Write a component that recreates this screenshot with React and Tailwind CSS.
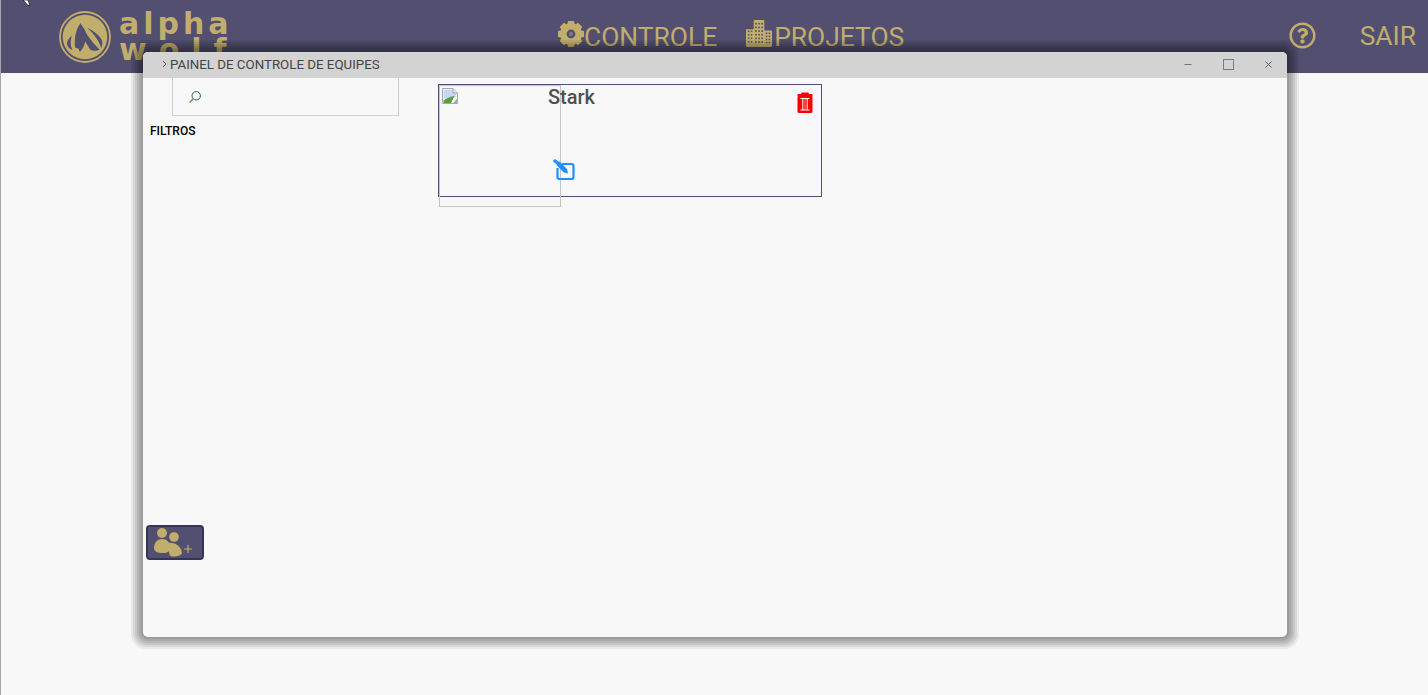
import React from "react";
import { FaRegQuestionCircle } from "react-icons/fa";

const gold = "#c1ad6c";
const dark = "#524f70";

function Logo() {
  return (
    <svg width="54" height="54" viewBox="0 0 54 54" className="shrink-0">
      <circle cx="27" cy="27" r="25" fill="none" stroke={gold} strokeWidth="1.8" />
      <circle cx="27" cy="27" r="22.3" fill={gold} />
      <path d="M22.3 13 L24.5 16.5 C26 18 27 20 27.6 22 C30 27 36 34 41.7 39.7 C38.5 41 35 41 32.3 39.7 C30 36 28.5 33.5 27.3 31.5 C26.5 35 24.5 39 22.3 41.5 C19 41 17.3 39 17 36 C16.5 30 17 25 18.5 21 C19.5 18 21 15.5 22.3 13Z" fill={dark} />
      <path d="M14 25.5 C10.5 28.5 8.8 31 9 34 C9.5 37 12 39.5 14.5 40 C12.5 36.5 12 31 14 25.5Z" fill={dark} />
      <path d="M29 17.5 C36 21 42.5 26 44.2 31 C44.5 34 44 36.5 43.3 38.5 C42 32 36 24 29 17.5Z" fill={dark} />
      <ellipse cx="18.3" cy="40.6" rx="2.8" ry="2.6" fill={gold} />
    </svg>
  );
}

function Gear() {
  const teeth = [0, 45, 90, 135, 180, 225, 270, 315];
  return (
    <svg width="28" height="28" viewBox="0 0 28 28" className="mb-[7px] mr-[-1px] shrink-0">
      {teeth.map((a) => (
        <path key={a} d="M11 1 H17 L18 6 H10Z" fill={gold} transform={`rotate(${a} 14 14)`} />
      ))}
      <circle cx="14" cy="14" r="7.6" fill="none" stroke={gold} strokeWidth="6.4" />
      <circle cx="14" cy="14" r="2.2" fill="#7d7670" />
    </svg>
  );
}

function Building() {
  const win = [];
  for (let r = 0; r < 6; r++) {
    for (let c = 0; c < 3; c++) win.push(<rect key={"a" + r + c} x={9.5 + c * 3.2} y={3 + r * 3.8} width="1.7" height="1.7" fill={dark} />);
  }
  for (let r = 0; r < 4; r++) {
    for (let c = 0; c < 2; c++) {
      win.push(<rect key={"b" + r + c} x={2 + c * 3} y={11 + r * 3.6} width="1.6" height="1.6" fill={dark} />);
      win.push(<rect key={"d" + r + c} x={20.5 + c * 3} y={13 + r * 3.2} width="1.6" height="1.6" fill={dark} />);
    }
  }
  return (
    <svg width="26" height="27" viewBox="0 0 27 28" className="mb-[7px] mr-[2px] shrink-0">
      <path d="M0 9.5 H8 V1 Q8 0 9 0 H18 Q19 0 19 1 V11 H26 Q27 11 27 12 V27 Q27 28 26 28 H1 Q0 28 0 27Z" fill={gold} />
      {win}
    </svg>
  );
}

function Users() {
  return (
    <svg width="40" height="30" viewBox="0 0 40 30">
      <path d="M14 15 C19 14 27.5 17 28 25 C27 28 22 28.5 18 28.5 C14 28 15 20 14 15Z" fill={gold} />
      <circle cx="20" cy="9" r="4.8" fill={gold} />
      <circle cx="8" cy="5" r="5" fill={gold} />
      <path d="M0 20 C0 14 4 11 8 11 C13 11 16 14 16 20 C16 23 14 25 9 25 C4 25 0 24 0 20Z" fill={gold} />
      <path d="M34 17 V25 M30 21 H38" stroke={gold} strokeWidth="1.2" fill="none" />
    </svg>
  );
}

function Trash() {
  return (
    <svg width="16" height="21" viewBox="0 0 16 21">
      <path d="M4.5 0.5 H11.5 L12 2 H15 Q15.5 2 15.5 3 V4 H0.5 V3 Q0.5 2 1 2 H4Z" fill="#ff0000" />
      <rect x="0.5" y="3.5" width="15" height="17.5" rx="1.5" fill="#ff0000" />
      <path d="M3.5 6.5 H12.5 M3.5 18 H12.5 M5.8 6.5 V18 M10.2 6.5 V18" stroke="#ffffff" strokeWidth="1" fill="none" />
      <path d="M8 6.5 V18" stroke="#ffffff" strokeWidth="0.5" />
    </svg>
  );
}

function Edit() {
  return (
    <svg width="22" height="22" viewBox="0 0 22 22">
      <path d="M9 5 H18.5 Q20.5 5 20.5 7 V18 Q20.5 20 18.5 20 H6.5 Q4.5 20 4.5 18 V9" fill="none" stroke="#1e90ff" strokeWidth="2.2" />
      <path d="M2 2 L4 3.5" stroke="#1e90ff" strokeWidth="3.4" strokeLinecap="round" />
      <path d="M4 3 L6.5 2.6 L14 10 L15 14.5 L10.5 13.2 L3.5 6Z" fill="#1e90ff" />
    </svg>
  );
}

function BrokenImage() {
  return (
    <svg width="16" height="16" viewBox="0 0 16 16">
      <path d="M0.5 0.5 H11 L15.5 5 V15.5 H0.5Z" fill="#ffffff" stroke="#a8a8a8" />
      <path d="M1.5 1.5 H10.5 L14.5 5.5 V9 L1.5 11Z" fill="#c6d8f5" />
      <path d="M1.5 15 V12.5 C5 10 9 8.5 12.5 8 L9 15Z" fill="#53a33c" />
      <path d="M11 0.5 V5 H15.5" fill="#e8e8e8" stroke="#a8a8a8" />
      <path d="M11 15.5 L15.5 10 V15.5Z" fill="#a8a8a8" />
    </svg>
  );
}

export default function App() {
  return (
    <div className="relative h-[695px] w-[1428px] overflow-hidden border-l border-l-[#a8a8a8] bg-[#f8f8f8] font-['Roboto',sans-serif]">
      <header className="flex h-[73px] items-center bg-[#524f70] pl-[57px] pr-[12px] text-[26.4px] text-[#c1ad6c]">
        <div className="flex w-[177px] items-center gap-[7px] self-start pt-[10px]">
          <Logo />
          <div className="font-['DejaVu_Sans',sans-serif] text-[30px] leading-[26px] font-bold">
            <div className="tracking-[4px]">alpha</div>
            <div className="tracking-[12px]">wolf</div>
          </div>
        </div>
        <nav className="ml-[322px] flex items-center gap-[29px] pt-[2px]">
          <a className="flex items-center">
            <Gear />
            <span>CONTROLE</span>
          </a>
          <a className="flex items-center">
            <Building />
            <span>PROJETOS</span>
          </a>
        </nav>
        <div className="ml-auto flex items-center gap-[44px]">
          <FaRegQuestionCircle size={27} className="mb-[2px]" />
          <span>SAIR</span>
        </div>
      </header>

      <section className="absolute top-[52px] left-[142px] flex h-[585px] w-[1144px] flex-col rounded-[5px] bg-[#f8f8f8] shadow-[0_0_0_2px_rgba(0,0,0,0.07),0_0_0_4px_rgba(0,0,0,0.08),0_0_0_6px_rgba(0,0,0,0.08),0_0_0_8px_rgba(0,0,0,0.08),0_0_0_10px_rgba(0,0,0,0.07),0_0_0_12px_rgba(0,0,0,0.06)]">
        <div className="flex h-[26px] shrink-0 items-center rounded-t-[5px] bg-[#d3d3d3] pr-[13px] pl-[19px] text-[13.3px] text-[#444444]">
          <svg width="5" height="8" viewBox="0 0 5 8" className="mr-[3px] mb-[3px]">
            <path d="M1 1 L4 4 L1 7" fill="none" stroke="#555555" strokeWidth="1" />
          </svg>
          <span className="mb-[1px]">PAINEL DE CONTROLE DE EQUIPES</span>
          <div className="mb-[1px] ml-auto flex items-center gap-[29px]">
            <svg width="11" height="11" viewBox="0 0 11 11"><path d="M1.5 5.5 H8.5" stroke="#777777" /></svg>
            <svg width="11" height="11" viewBox="0 0 11 11"><rect x="0.5" y="0.5" width="10" height="10" fill="none" stroke="#6d7f8d" /></svg>
            <svg width="11" height="11" viewBox="0 0 11 11"><path d="M2.5 2.5 L8.5 8.5 M8.5 2.5 L2.5 8.5" stroke="#556070" /></svg>
          </div>
        </div>

        <div className="flex min-h-0 flex-1">
          <aside className="flex w-[295px] shrink-0 flex-col pl-[3px]">
            <div className="ml-[26px] flex h-[38px] w-[227px] items-center border border-t-0 border-[#cfcfcf] pl-[15px]">
              <svg width="14" height="14" viewBox="0 0 14 14">
                <circle cx="8.2" cy="5.8" r="4.2" fill="none" stroke="#2e5560" strokeWidth="1" />
                <path d="M5 9 L1.5 12.5" stroke="#8a7a3a" strokeWidth="1.2" />
              </svg>
            </div>
            <div className="mt-[8px] pl-[4px] text-[12px] leading-[14px] font-medium text-black">FILTROS</div>
            <button className="mt-[387px] flex h-[35px] w-[58px] items-center rounded-[4px] border-2 border-[#37345a] bg-[#524f70] pl-[6px]">
              <Users />
            </button>
          </aside>

          <main className="pt-[6px]">
            <article className="relative flex h-[113px] w-[384px] items-start border border-[#524f70]">
              <div className="h-[122px] w-[122px] shrink-0 border border-[#c4c4c4] pt-[2px] pl-[2px]">
                <BrokenImage />
              </div>
              <h2 className="ml-[-13px] text-[20px] leading-[24px] font-medium text-[#4f4f4f]">Stark</h2>
              <div className="ml-auto pt-[7px] pr-[8px]">
                <Trash />
              </div>
              <div className="absolute top-[74px] left-[114px]">
                <Edit />
              </div>
            </article>
          </main>
        </div>
      </section>

      <svg width="10" height="6" viewBox="0 0 10 6" className="absolute top-0 left-[21px]">
        <path d="M1 0 L6 5.5 L8 5.5 L6 0Z" fill="#ffffff" stroke="#222222" strokeWidth="0.8" />
      </svg>
    </div>
  );
}
